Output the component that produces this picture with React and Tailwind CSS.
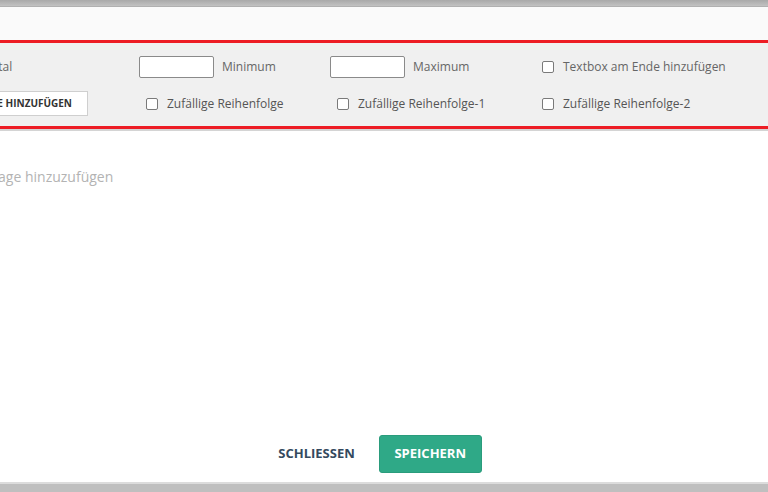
import React from "react";

function Box() {
  return <span className="inline-block w-[12px] h-[12px] shrink-0 rounded-[2px] border border-[#7a7a7a] bg-white" />;
}

export default function App() {
  const font = { fontFamily: '"Open Sans", "Noto Sans", sans-serif' };
  return (
    <div className="w-[768px] h-[492px] flex flex-col bg-[#bfbfbf] overflow-hidden" style={font}>
      <div className="h-[7px] shrink-0 bg-gradient-to-b from-[#a9a9a9] to-[#c2c2c2] border-b border-[#b0b0b0]" />
      <div className="flex-1 flex flex-col bg-white border-b-2 border-[#dcdcdc] min-h-0">
        <div className="h-[33px] shrink-0 bg-[#fafafa]" />
        <div className="shrink-0 border-y-[3px] border-[#ed1c24] bg-[#f0f0f0] pt-[13px] pb-[10px] overflow-hidden text-[12px] text-[#666]">
          <div className="flex items-center h-[22px]">
            <div className="w-[139px] shrink-0 flex">
              <span className="ml-[-46px] whitespace-nowrap">Horizontal</span>
            </div>
            <div className="w-[191px] shrink-0 flex items-center gap-[8px]">
              <span className="w-[75px] h-[22px] bg-white border border-[#8a8a8a] rounded-[2px]" />
              <span>Minimum</span>
            </div>
            <div className="w-[212px] shrink-0 flex items-center gap-[8px]">
              <span className="w-[75px] h-[22px] bg-white border border-[#8a8a8a] rounded-[2px]" />
              <span>Maximum</span>
            </div>
            <div className="flex items-center gap-[9px] whitespace-nowrap">
              <Box />
              <span>Textbox am Ende hinzufügen</span>
            </div>
          </div>
          <div className="flex items-center h-[25px] mt-[13px]">
            <div className="w-[146px] shrink-0 flex">
              <span className="ml-[-60px] w-[148px] h-[25px] shrink-0 bg-white border border-[#cfcfcf] flex items-center justify-end pr-[15px] text-[10px] font-bold text-[#333] whitespace-nowrap">
                REIHE HINZUFÜGEN
              </span>
            </div>
            <div className="w-[191px] shrink-0 flex items-center gap-[9px] text-[#555]">
              <Box />
              <span>Zufällige Reihenfolge</span>
            </div>
            <div className="w-[205px] shrink-0 flex items-center gap-[9px] text-[#555]">
              <Box />
              <span>Zufällige Reihenfolge-1</span>
            </div>
            <div className="flex items-center gap-[9px] text-[#555] whitespace-nowrap">
              <Box />
              <span>Zufällige Reihenfolge-2</span>
            </div>
          </div>
        </div>
        <div className="h-[2px] shrink-0 bg-[#d4d4d4]" />
        <div className="flex-1 overflow-hidden pt-[35px]">
          <div className="ml-[-177px] whitespace-nowrap text-[14px] text-[#b3b3b3]">
            Klicken Sie hier, um eine Frage hinzuzufügen
          </div>
        </div>
        <div className="shrink-0 flex items-center justify-center gap-[24px] pb-[9px] pr-[8px]">
          <span className="text-[13px] font-bold text-[#34495e]">SCHLIESSEN</span>
          <span className="w-[103px] h-[38px] rounded-[3px] bg-[#2fa987] border border-[#2a9c7c] flex items-center justify-center text-[13px] font-bold text-white">
            SPEICHERN
          </span>
        </div>
      </div>
      <div className="h-[8px] shrink-0 bg-[#bfbfbf]" />
    </div>
  );
}
